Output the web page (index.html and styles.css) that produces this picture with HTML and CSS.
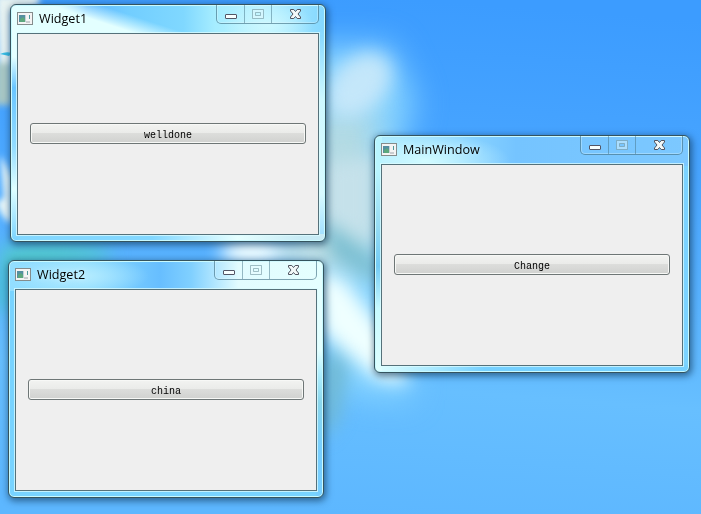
FILE: index.html
```html
<!DOCTYPE html>
<html lang="en">
<head>
<meta charset="utf-8">
<title>Desktop</title>
<link rel="stylesheet" href="styles.css">
</head>
<body>
<svg class="symbols" width="0" height="0" aria-hidden="true">
  <symbol id="app" viewBox="0 0 16 13">
    <rect x=".5" y=".5" width="15" height="12" fill="#f4f4f4" stroke="#848c8c"/>
    <rect x="2" y="3" width="6" height="7" fill="#548fa0"/>
    <path d="M3 10V7L6 5L8 7V10Z" fill="#5ca77d"/>
    <path d="M8.500 3V10" stroke="#c5d1d5"/>
    <path d="M12.500 3V7" stroke="#4e9a9b"/>
    <rect x="9" y="9" width="4" height="2" fill="#c9cccf"/>
  </symbol>
  <symbol id="min" viewBox="0 0 12 5">
    <rect x=".5" y=".5" width="11" height="4" rx=".5" fill="#f7ffff" stroke="#535665"/>
  </symbol>
  <symbol id="max" viewBox="0 0 12 10">
    <path d="M.5 .5H11.500V9.500H.5ZM3.500 3.500V6.500H8.500V3.500Z" fill="#e8faff" fill-opacity=".45" fill-rule="evenodd" stroke="#72949f" stroke-opacity=".6"/>
  </symbol>
  <symbol id="close" viewBox="0 0 11 10">
    <path d="M.5 .5H3.800L5.500 2.500L7.200 .5H10.500V2L8 5L10.500 8V9.500H7.200L5.500 7.500L3.800 9.500H.5V8L3 5L.5 2Z" fill="#f2f8f8" stroke="#50535f" stroke-linejoin="round"/>
  </symbol>
</svg>
<main class="desktop">
  <svg class="wallpaper" viewBox="0 0 701 514" aria-hidden="true">
    <defs>
      <linearGradient id="sky" x1=".6" y1="0" x2=".5" y2="1">
        <stop offset="0" stop-color="#3c9cff"/>
        <stop offset=".3" stop-color="#48a5ff"/>
        <stop offset=".75" stop-color="#67bfff"/>
        <stop offset="1" stop-color="#5db7ff"/>
      </linearGradient>
      <filter id="soft" x="-60%" y="-60%" width="220%" height="220%" color-interpolation-filters="sRGB"><feGaussianBlur stdDeviation="9"/></filter>
      <filter id="wide" x="-50%" y="-50%" width="200%" height="200%" color-interpolation-filters="sRGB"><feGaussianBlur stdDeviation="16"/></filter>
      <filter id="fine" x="-50%" y="-50%" width="200%" height="200%" color-interpolation-filters="sRGB"><feGaussianBlur stdDeviation="3"/></filter>
    </defs>
    <rect width="701" height="514" fill="url(#sky)"/>
    <g filter="url(#wide)">
      <path d="M290 45L390 45L415 100L400 150L410 400L340 390L280 240Z" fill="#8dd8ff" opacity=".9"/>
      <path d="M310 110H376V270H310Z" fill="#b5dbe3"/>
    </g>
    <g filter="url(#soft)">
      <ellipse cx="359" cy="85" rx="38" ry="26" transform="rotate(-45 359 85)" fill="#cbe9fa" opacity=".9"/>
      <path d="M322 165L375 155V245L322 220Z" fill="#c5e1ea"/>
      <path d="M324 220L380 263V285L324 250Z" fill="#78bdd0"/>
      <path d="M315 270L345 280L390 340L408 384L376 378L322 332Z" fill="#efffff"/>
      <path d="M325 345L347 365L338 420L322 440Z" fill="#71b9d1"/>
      <path d="M0 248Q55 236 115 252L100 262L0 272Z" fill="#50c8cb"/>
      <path d="M-5 270H12V310H-5Z" fill="#45bfd0"/>
      <ellipse cx="252" cy="252" rx="32" ry="14" fill="#f4ffff"/>
      <path d="M278 242H330V262H278Z" fill="#c1dde1"/>
    </g>
    <g filter="url(#fine)">
      <path d="M-5 -5H40L38 6L12 12L12 95L0 95Z" fill="#e7f3f3"/>
      <path d="M-5 63H12V105H-5Z" fill="#a8c7c5"/>
      <path d="M0 155Q7 165 12 178V223Q2 220 -4 202L4 198Z" fill="#e8f6f8"/>
      <path d="M70 -3H220V7H110Z" fill="#459fff" opacity=".6"/>
    </g>
    <path d="M0 54Q6 51 12 53L9 56Z" fill="#37bce5"/>
  </svg>

  <section class="window widget-one">
    <header class="titlebar">
      <svg class="app-icon"><use href="#app"/></svg><h1 class="title">Widget1</h1>
      <div class="controls"><span class="control"><svg class="min"><use href="#min"/></svg></span><span class="control"><svg class="max"><use href="#max"/></svg></span><span class="control close"><svg class="cross"><use href="#close"/></svg></span></div>
    </header>
    <div class="client"><button class="push" type="button">welldone</button></div>
  </section>

  <section class="window widget-two">
    <header class="titlebar">
      <svg class="app-icon"><use href="#app"/></svg><h1 class="title">Widget2</h1>
      <div class="controls"><span class="control"><svg class="min"><use href="#min"/></svg></span><span class="control"><svg class="max"><use href="#max"/></svg></span><span class="control close"><svg class="cross"><use href="#close"/></svg></span></div>
    </header>
    <div class="client"><button class="push" type="button">china</button></div>
  </section>

  <section class="window main-window">
    <header class="titlebar">
      <svg class="app-icon"><use href="#app"/></svg><h1 class="title">MainWindow</h1>
      <div class="controls"><span class="control"><svg class="min"><use href="#min"/></svg></span><span class="control"><svg class="max"><use href="#max"/></svg></span><span class="control close"><svg class="cross"><use href="#close"/></svg></span></div>
    </header>
    <div class="client"><button class="push" type="button">Change</button></div>
  </section>
</main>
</body>
</html>
```
FILE: styles.css
```css
* { box-sizing: border-box; }
body { margin: 0; overflow: hidden; }
.symbols { position: absolute; }
.desktop { position: relative; width: 701px; height: 514px; overflow: hidden; }
.wallpaper { display: block; width: 701px; height: 514px; }

.window {
  position: absolute;
  display: flex;
  flex-direction: column;
  width: 316px;
  height: 238px;
  padding: 0 6px 6px;
  border: 1px solid #35545f;
  border-radius: 6px;
  box-shadow: inset 0 0 0 1px #c9faff, 1px 2px 7px 1px rgba(10, 45, 75, .6);
}
.widget-one {
  left: 10px;
  top: 4px;
  background:
    linear-gradient(90deg, transparent 45%, #e6ffff 72%, #c8ebf5 92%) bottom / 100% 7px no-repeat,
    linear-gradient(180deg, transparent 10%, #cef8ff 40%, #d8faff 80%, #9bdcff) right / 7px 100% no-repeat,
    linear-gradient(180deg, #e5ffff 22%, #69c5ff 35%, #93dcff 60%, #e0ffff 78%, #79d3ff) left / 7px 100% no-repeat,
    radial-gradient(ellipse 45px 25px at 257px 20px, #ccf8ff, rgba(204, 248, 255, 0)),
    linear-gradient(18deg, #e3ffff 0 40px, rgba(227, 255, 255, 0) 56px) 0 0 / 200px 30px no-repeat,
    linear-gradient(90deg, #d6faff 12%, #62b9ff 24%, #72ceff 38%, #80d8ff 55%, #a6edff 65%, #b9f1ff 80%, #83d7ff) top / 100% 30px no-repeat,
    #82d7ff;
}
.widget-two {
  left: 8px;
  top: 260px;
  background:
    linear-gradient(180deg, #e4ffff 38%, #aeeeff 48%, #8ad6ec 60%, #77ceff 80%) right / 7px 100% no-repeat,
    radial-gradient(ellipse 70px 20px at 70px 15px, #b8edff, rgba(184, 237, 255, 0)),
    linear-gradient(90deg, #93deff, #8adcff 25%, #67beff 48%, #80d0ff 58%, #e2fcff 73%, #e5ffff) top / 100% 30px no-repeat,
    #78d3ff;
}
.main-window {
  left: 374px;
  top: 135px;
  background:
    linear-gradient(180deg, #b9f5ff 15%, #96dcf4 38%, #73cbf5 55%, #c7faff 73%, #e0ffff) left / 7px 100% no-repeat,
    linear-gradient(90deg, #e0ffff, #a5e7ff 20%, #75d0ff 35%) bottom / 100% 7px no-repeat,
    radial-gradient(ellipse 85px 28px at 50px 25px, #d2fbff, rgba(210, 251, 255, 0)),
    linear-gradient(90deg, #b0edff, #8bd5ff 28%, #75c4ff 45%, #7cc8ff) top / 100% 30px no-repeat,
    #7bd3ff;
}
.titlebar { display: flex; flex: 0 0 28px; align-items: flex-start; }
.app-icon { flex: none; width: 16px; height: 13px; margin-top: 7px; }
.title {
  flex: 1;
  margin: 5px 0 0 6px;
  font: 400 12.6px/17px "Open Sans", "Noto Sans", sans-serif;
  color: #000;
  text-shadow: 0 0 5px rgba(225, 255, 255, .7);
}
.controls {
  display: flex;
  flex: none;
  width: 103px;
  height: 19px;
  border: 1px solid rgba(70, 115, 135, .65);
  border-top: 0;
  border-radius: 0 0 5px 5px;
  box-shadow: inset 0 0 0 1px rgba(225, 250, 255, .35);
}
.control { display: flex; width: 28px; justify-content: center; align-items: flex-start; border-right: 1px solid rgba(70, 115, 135, .5); }
.control + .control { width: 27px; }
.control.close { flex: 1; border-right: 0; padding-left: 1px; }
.min { width: 12px; height: 5px; margin-top: 9px; }
.max { width: 12px; height: 10px; margin-top: 4px; }
.cross { width: 11px; height: 10px; margin-top: 4px; }
.client {
  flex: 1;
  display: flex;
  align-items: center;
  padding: 0 12px 1px;
  border: 1px solid #55717a;
  background: #efefef;
  box-shadow: 0 0 0 1px rgba(220, 252, 255, .75);
}
.push {
  width: 100%;
  height: 21px;
  padding: 4px 0 0;
  border: 1px solid #6e7676;
  border-radius: 3px;
  background: linear-gradient(#f2f3f1 0, #eaebe9 48%, #dcdddb 50%, #d0d1cf 100%);
  box-shadow: inset 0 0 0 1px #f7f8f6;
  font: 400 10px/15px "Liberation Mono", monospace;
  color: #000;
}
```
